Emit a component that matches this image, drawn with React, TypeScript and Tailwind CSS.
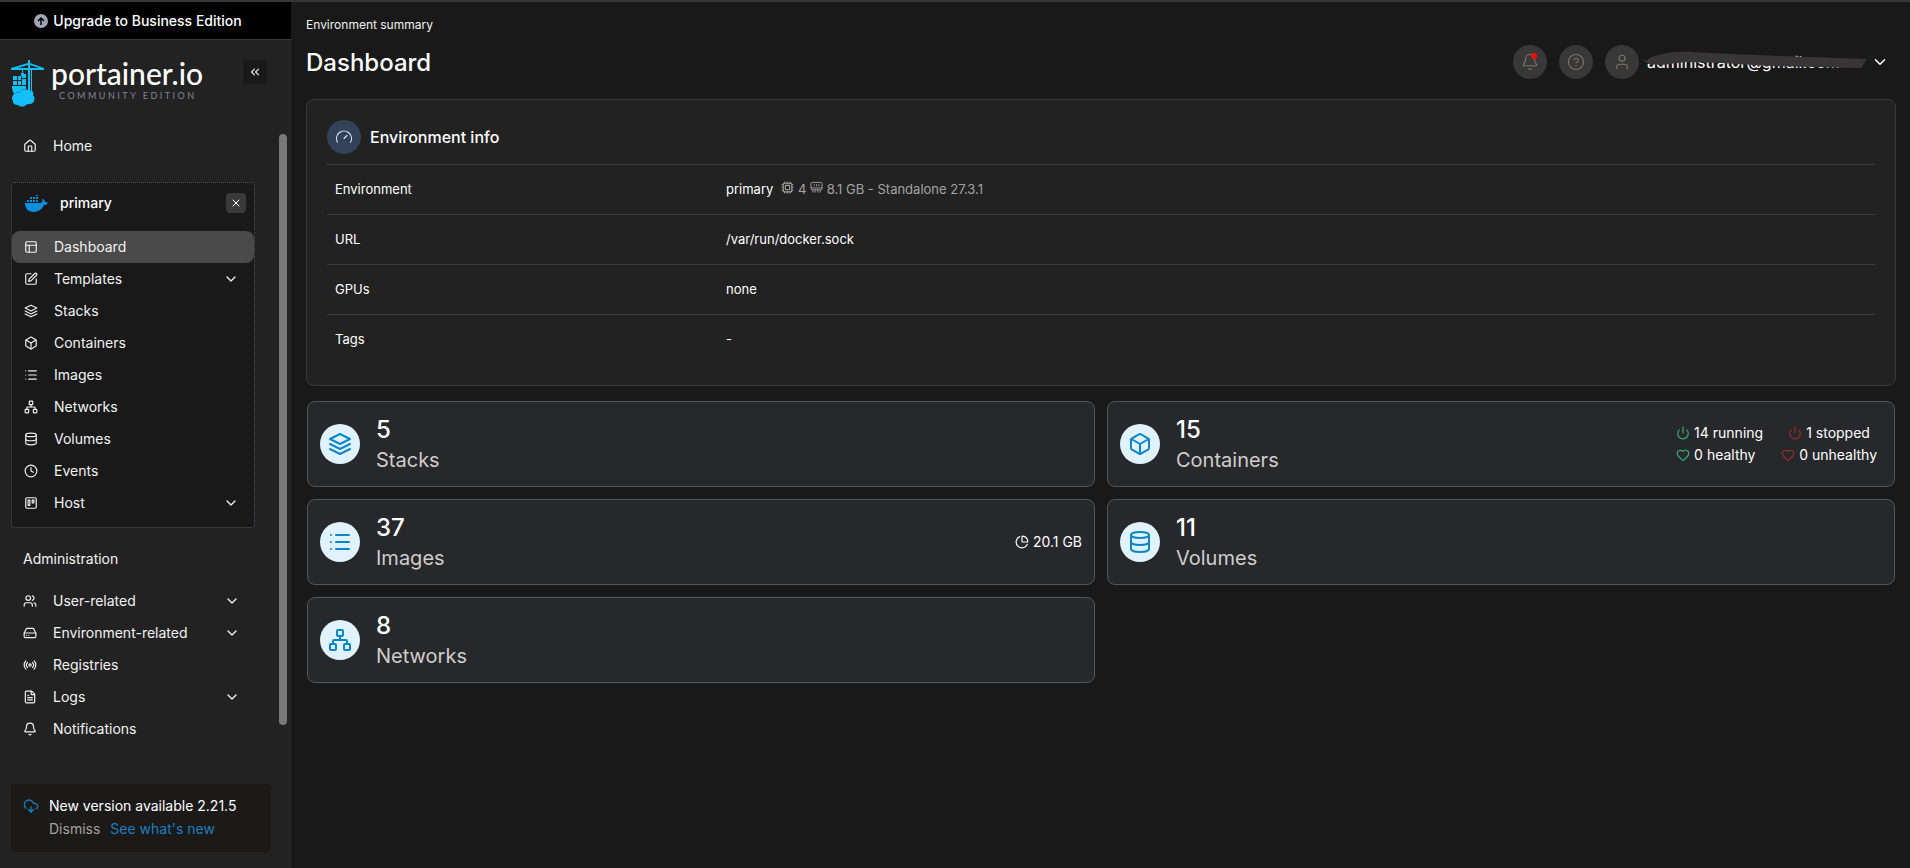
import type { ReactNode } from "react";
import {
  Bell,
  Box,
  ChevronDown,
  ChevronsLeft,
  CircleHelp,
  Clock,
  CloudDownload,
  Cpu,
  Database,
  FileText,
  Gauge,
  HardDrive,
  Heart,
  Home,
  List,
  Network,
  PieChart,
  Power,
  Radio,
  SquarePen,
  Trello,
  User,
  Users,
  X,
  type LucideIcon,
} from "lucide-react";

type IconType = LucideIcon | ((props: { className?: string }) => ReactNode);

interface NavItem {
  label: string;
  icon: IconType;
  expandable?: boolean;
  active?: boolean;
}

const ENVIRONMENT_ITEMS: NavItem[] = [
  { label: "Dashboard", icon: LayoutIcon, active: true },
  { label: "Templates", icon: SquarePen, expandable: true },
  { label: "Stacks", icon: LayersIcon },
  { label: "Containers", icon: Box },
  { label: "Images", icon: List },
  { label: "Networks", icon: Network },
  { label: "Volumes", icon: Database },
  { label: "Events", icon: Clock },
  { label: "Host", icon: Trello, expandable: true },
];

const ADMIN_ITEMS: NavItem[] = [
  { label: "User-related", icon: Users, expandable: true },
  { label: "Environment-related", icon: HardDrive, expandable: true },
  { label: "Registries", icon: Radio },
  { label: "Logs", icon: FileText, expandable: true },
  { label: "Notifications", icon: Bell },
];

function LayoutIcon({ className }: { className?: string }) {
  return (
    <svg className={className} viewBox="0 0 24 24" fill="none" stroke="currentColor" strokeWidth="2" strokeLinecap="round" strokeLinejoin="round">
      <rect x="3" y="3" width="18" height="18" rx="2" />
      <path d="M3 9h18M9 21V9" />
    </svg>
  );
}

function LayersIcon({ className }: { className?: string }) {
  return (
    <svg className={className} viewBox="0 0 24 24" fill="none" stroke="currentColor" strokeWidth="2" strokeLinecap="round" strokeLinejoin="round">
      <path d="M12 2 2 7l10 5 10-5-10-5Z" />
      <path d="m2 17 10 5 10-5M2 12l10 5 10-5" />
    </svg>
  );
}

function MemoryIcon({ className }: { className?: string }) {
  return (
    <svg className={className} viewBox="0 0 14 14" fill="none" stroke="currentColor" aria-hidden="true">
      <rect x="1" y="1.5" width="12" height="8" rx="1.5" />
      <path d="M4.5 3.5v2M7 3.5v2M9.5 3.5v2M1 7.5h12M3 9.5v3M5.5 9.5v3M8.5 9.5v3M11 9.5v3" />
    </svg>
  );
}

function CraneLogo() {
  return (
    <svg width="34" height="47" viewBox="0 0 34 47" fill="#13bef9" aria-hidden="true">
      <path d="M17 0h2v3l14 5v2H0V8l17-5Z M19 5v3h9Z M17 5 7 8h10Z" fillRule="evenodd" />
      <path d="M17 9h2v22h-2zM20 9h1v22h-1zM11 9h1v4h-1zM10 13h3v3h-3z" />
      <path d="M11 14h4v4h-4zM2 16h4v4H2zM7 16h3v4H7zM2 21h4v4H2zM7 21h3v4H7zM11 19h4v6h-4z" />
      <path d="M1 26h14v3c-3 0-5 1-6 3-3 0-5 1-6 2-1-2-2-4-2-8Z" />
      <path d="M5 33c2-1 3 0 4-1 2-4 8-3 9-1 4-1 5 2 4 4 3 3 1 9-3 9-2 0-3 0-4 1-2 2-6 2-8 0-3 0-5-1-5-4-2-2-1-7 3-8Z" />
    </svg>
  );
}

function DockerLogo() {
  return (
    <svg width="23" height="17" viewBox="0 0 23 17" fill="#0d8fdf" aria-hidden="true">
      <path d="M2 5h2v2H2zM5 5h2v2H5zM8 5h2v2H8zM11 5h2v2h-2zM5 2h2v2H5zM8 2h2v2H8zM11 2h2v2h-2zM11 0h2v1h-2z" />
      <path d="M0 8h15c2 0 3-1 2-4 2 0 3 2 3 3 1 0 2 0 3 1-1 1-2 2-4 2-2 4-5 7-11 7-5 0-8-4-8-9Z" />
    </svg>
  );
}

function NavList({ items }: { items: NavItem[] }) {
  return (
    <ul>
      {items.map(({ label, icon: Icon, expandable, active }) => (
        <li key={label}>
          <a
            href="#"
            className={`flex h-8 items-center rounded-lg pl-3 pr-[15px] text-sm text-[#f2f2f2] ${active ? "bg-[#4a4a4a]" : ""}`}
          >
            <Icon className="size-3.5 shrink-0" />
            <span className="ml-4 flex-1">{label}</span>
            {expandable && <ChevronDown className="size-4" />}
          </a>
        </li>
      ))}
    </ul>
  );
}

function Sidebar() {
  return (
    <aside className="flex w-[291px] shrink-0 flex-col bg-[#222222]">
      <button className="flex h-[38px] items-center justify-center gap-1 border-b border-[#3d3d3d] bg-black pr-4 text-sm font-medium text-white">
        <svg className="size-4" viewBox="0 0 16 16" fill="none" stroke="black" strokeWidth="1.5" aria-hidden="true">
          <circle cx="8" cy="8" r="7" fill="#a0a5b5" stroke="none" />
          <path d="M8 12V5M5 8l3-3 3 3" />
        </svg>
        Upgrade to Business Edition
      </button>

      <div className="flex h-[90px] justify-between pl-[11px] pr-6 pt-4">
        <a href="#" className="flex items-start gap-1.5 font-['Lato',sans-serif]">
          <span className="pt-1">
            <CraneLogo />
          </span>
          <span className="flex flex-col">
            <span className="text-[30px] font-medium leading-[34px] text-white">portainer.io</span>
            <span className="pl-2 text-[9px] leading-3 tracking-[2.5px] text-[#81859a]">COMMUNITY EDITION</span>
          </span>
        </a>
        <button aria-label="Collapse sidebar" className="mt-1 flex size-6 items-center justify-center rounded bg-[#191919] text-[#e5e5e5]">
          <ChevronsLeft className="size-3.5" />
        </button>
      </div>

      <div className="flex pr-1">
        <nav className="flex-1 pl-[11px] pr-6">
          <NavList items={[{ label: "Home", icon: Home }]} />

          <div className="mt-5 rounded border border-dotted border-[#55555f] bg-[#191919] pb-2">
            <div className="mb-2 flex h-10 items-center pl-[13px] pr-2 text-sm font-medium text-white">
              <DockerLogo />
              <span className="ml-3 flex-1">primary</span>
              <button aria-label="Close environment" className="flex size-5 items-center justify-center rounded bg-[#3a3a3a]">
                <X className="size-3" />
              </button>
            </div>
            <NavList items={ENVIRONMENT_ITEMS} />
          </div>

          <h2 className="mb-2.5 mt-[15px] pl-3 text-sm leading-8 text-[#f2f2f2]">Administration</h2>
          <NavList items={ADMIN_ITEMS} />
        </nav>
        <div className="mt-1 h-[591px] w-2 rounded-full bg-[#787878]" />
      </div>

      <div className="mb-4 ml-[11px] mr-5 mt-auto flex rounded bg-[#1b1a19] px-3 pb-3 pt-2.5 text-sm">
        <CloudDownload className="mt-1 size-4 text-[#1b7fb8]" />
        <div className="ml-2.5">
          <p className="leading-[23px] text-white">New version available 2.21.5</p>
          <div className="flex gap-2.5 leading-[23px]">
            <button className="text-[#a8a29e]">Dismiss</button>
            <a href="#" className="text-[#1c7fc0]">See what's new</a>
          </div>
        </div>
      </div>
    </aside>
  );
}

function Header() {
  return (
    <header className="flex h-[97px] items-end justify-between pb-5">
      <div>
        <p className="text-xs text-[#f2f2f2]">Environment summary</p>
        <h1 className="mt-3.5 text-2xl font-medium text-white">Dashboard</h1>
      </div>
      <div className="flex items-center gap-3 pr-[7px] text-[#7b7570]">
        <button aria-label="Notifications" className="relative flex size-[34px] items-center justify-center rounded-full bg-[#383838]">
          <Bell className="size-[18px]" strokeWidth={1.5} />
          <span className="absolute right-2.5 top-2 size-1.5 rounded-full bg-[#f30b0b]" />
        </button>
        <button aria-label="Help" className="flex size-[34px] items-center justify-center rounded-full bg-[#383838]">
          <CircleHelp className="size-[18px]" strokeWidth={1.5} />
        </button>
        <button className="flex items-center text-white">
          <span className="flex size-[34px] items-center justify-center rounded-full bg-[#383838] text-[#7b7570]">
            <User className="size-[18px]" strokeWidth={1.5} />
          </span>
          <span className="relative ml-2 w-[220px] text-left text-base">
            administrator@gmail.com
            <svg className="absolute -left-1.5 top-0 h-6 w-[226px]" viewBox="0 0 226 24" fill="#383536" aria-hidden="true">
              <path d="M0 9 8 14l12 1 25-3 35 1 50 3 90 2 6-9-86-3-50-2-40-2c-20-1-34 3-42 6l-1 3Z" />
            </svg>
          </span>
          <ChevronDown className="ml-1 size-[18px]" />
        </button>
      </div>
    </header>
  );
}

function InfoRow({ label, children }: { label: string; children: ReactNode }) {
  return (
    <tr className="h-[50px] border-t border-[#3d3d3d]">
      <th scope="row" className="w-[391px] px-2 text-left font-normal">{label}</th>
      <td className="px-2">{children}</td>
    </tr>
  );
}

function EnvironmentInfo() {
  return (
    <section className="rounded-lg border border-[#393939] bg-[#222222] px-5 py-5">
      <div className="flex items-center gap-[9px] pb-2.5">
        <span className="flex size-[34px] items-center justify-center rounded-full bg-[#344259] text-[#dbeafe]">
          <Gauge className="size-[18px]" strokeWidth={1.5} />
        </span>
        <h2 className="text-base font-medium text-white">Environment info</h2>
      </div>
      <table className="w-full text-[13px] text-white">
        <tbody>
          <InfoRow label="Environment">
            primary
            <span className="ml-2 text-[#a3a3a3]">
              <Cpu className="inline size-[13px] align-text-top" /> 4{" "}
              <MemoryIcon className="inline size-[13px] align-text-top" /> 8.1 GB - Standalone 27.3.1
            </span>
          </InfoRow>
          <InfoRow label="URL">/var/run/docker.sock</InfoRow>
          <InfoRow label="GPUs">none</InfoRow>
          <InfoRow label="Tags">-</InfoRow>
        </tbody>
      </table>
    </section>
  );
}

function StatCard({ value, label, icon: Icon, children }: { value: number; label: string; icon: IconType; children?: ReactNode }) {
  return (
    <a href="#" className="flex h-[86px] items-center rounded-lg border border-[#55575f] bg-[#27282c] px-3">
      <span className="flex size-10 items-center justify-center rounded-full bg-[#e0f2fe] text-[#0b86c8]">
        <Icon className="size-6" />
      </span>
      <div className="ml-4 flex-1 pt-0.5">
        <div className="text-2xl font-medium leading-[30px] text-white">{value}</div>
        <div className="text-xl leading-[30px] text-[#d0cdcb]">{label}</div>
      </div>
      {children}
    </a>
  );
}

export default function App() {
  return (
    <div className="flex min-h-screen border-t-2 border-[#363636] bg-[#191919] font-['Inter',sans-serif]">
      <Sidebar />
      <main className="flex-1 pl-[15px] pr-3.5">
        <Header />
        <EnvironmentInfo />
        <div className="mx-px mt-[15px] grid grid-cols-2 gap-3">
          <StatCard value={5} label="Stacks" icon={LayersIcon} />
          <StatCard value={15} label="Containers" icon={Box}>
            <div className="grid grid-cols-[auto_auto] gap-x-[18px] pr-[5px] text-sm leading-[22px] text-white">
              <span className="flex items-center gap-1">
                <Power className="size-3.5 text-[#32b275]" /> 14 running
              </span>
              <span className="flex items-center justify-center gap-1">
                <Power className="size-3.5 text-[#9b2c24]" /> 1 stopped
              </span>
              <span className="flex items-center gap-1">
                <Heart className="size-3.5 text-[#32b275]" /> 0 healthy
              </span>
              <span className="flex items-center gap-1">
                <Heart className="size-3.5 text-[#9b2c24]" /> 0 unhealthy
              </span>
            </div>
          </StatCard>
          <StatCard value={37} label="Images" icon={List}>
            <span className="flex items-center gap-1 text-sm text-white">
              <PieChart className="size-3.5" /> 20.1 GB
            </span>
          </StatCard>
          <StatCard value={11} label="Volumes" icon={Database} />
          <StatCard value={8} label="Networks" icon={Network} />
        </div>
      </main>
    </div>
  );
}
